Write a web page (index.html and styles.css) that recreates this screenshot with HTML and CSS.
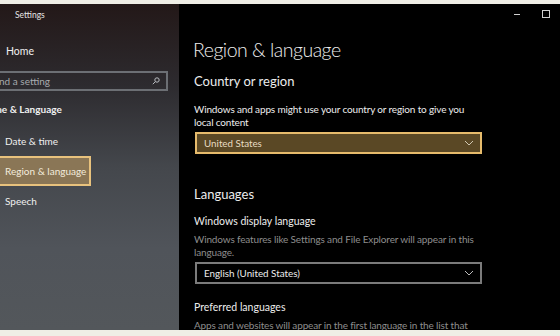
FILE: index.html
```html
<!DOCTYPE html>
<html lang="en">
<head>
    <meta charset="UTF-8">
    <title>Settings - Region &amp; language</title>
    <link rel="stylesheet" href="styles.css">
</head>
<body>
    <div class="frame">
        <div class="window">
            <aside class="sidebar">
                <div class="app-title">Settings</div>
                <div class="nav-home">Home</div>
                <div class="search-box">
                    <span>Find a setting</span>
                    <svg class="search-icon" width="8" height="8" viewBox="0 0 8 8">
                        <circle cx="5" cy="3" r="2.2" fill="none" stroke="#b8bcc0" stroke-width="1"/>
                        <line x1="3.4" y1="4.6" x2="0.8" y2="7.2" stroke="#b8bcc0" stroke-width="1"/>
                    </svg>
                </div>
                <div class="nav-group">Time &amp; Language</div>
                <div class="nav-item">Date &amp; time</div>
                <div class="nav-item selected">Region &amp; language</div>
                <div class="nav-item">Speech</div>
            </aside>

            <main class="content">
                <div class="window-controls">
                    <span class="ctrl-min"></span>
                    <span class="ctrl-max"></span>
                </div>

                <h1>Region &amp; language</h1>

                <h2>Country or region</h2>
                <p class="desc">Windows and apps might use your country or region to give you<br>local content</p>
                <div class="dropdown highlighted">
                    <span>United States</span>
                    <svg class="chevron" width="10" height="6" viewBox="0 0 10 6">
                        <polyline points="1,1 5,5 9,1" fill="none" stroke="#cfc6b0" stroke-width="1"/>
                    </svg>
                </div>

                <h2 class="languages">Languages</h2>
                <h3>Windows display language</h3>
                <p class="desc muted">Windows features like Settings and File Explorer will appear in this<br>language.</p>
                <div class="dropdown">
                    <span>English (United States)</span>
                    <svg class="chevron" width="10" height="6" viewBox="0 0 10 6">
                        <polyline points="1,1 5,5 9,1" fill="none" stroke="#bbbbbb" stroke-width="1"/>
                    </svg>
                </div>

                <h3 class="preferred">Preferred languages</h3>
                <p class="desc muted">Apps and websites will appear in the first language in the list that</p>
            </main>
        </div>
    </div>
</body>
</html>
```

FILE: styles.css
```css
body {
    margin: 0;
    width: 560px;
    height: 336px;
    overflow: hidden;
    background-color: #efeee6;
    font-family: Lato, 'Open Sans', sans-serif;
}
.frame {
    padding-top: 4px;
    height: 326px;
    background-color: #efeee6;
}
.window {
    display: flex;
    height: 326px;
    overflow: hidden;
}
.sidebar {
    width: 179px;
    flex-shrink: 0;
    background: linear-gradient(to bottom, #231818 0%, #2d2b2f 25%, #44474c 50%, #50545a 75%, #53575b 100%);
    color: #f0f0f0;
    overflow: hidden;
    white-space: nowrap;
}
.app-title {
    font-size: 8.5px;
    padding: 6px 0 0 15px;
    height: 15px;
    color: #e6e6e6;
}
.nav-home {
    font-size: 10.5px;
    padding: 20px 0 0 6px;
    height: 26px;
}
.search-box {
    display: flex;
    align-items: center;
    justify-content: space-between;
    margin-left: -20px;
    width: 168px;
    height: 16px;
    border: 2px solid #6c6f74;
    padding: 0 4px 0 12px;
    font-size: 10px;
    color: #a7aaae;
    box-sizing: content-box;
}
.search-box span {
    margin-left: -3px;
}
.search-icon {
    margin-right: 2px;
}
.nav-group {
    font-size: 10px;
    font-weight: bold;
    margin: 12px 0 0 -15px;
    height: 23px;
}
.nav-item {
    font-size: 10px;
    padding-left: 5px;
    height: 30px;
    line-height: 30px;
    box-sizing: border-box;
    width: 91px;
}
.nav-item.selected {
    margin-left: -10px;
    padding-left: 13px;
    width: 101px;
    background-color: #8a7656;
    border: 2px solid #e8c27d;
    line-height: 26px;
    color: #f3ecdc;
}
.content {
    flex: 1;
    background-color: #000;
    color: #ededed;
    padding-left: 14px;
    position: relative;
    white-space: nowrap;
}
.window-controls {
    position: absolute;
    top: 6px;
    right: 10px;
    display: flex;
    align-items: center;
    gap: 22px;
}
.ctrl-min {
    width: 6px;
    height: 1px;
    background-color: #d0d0d0;
}
.ctrl-max {
    width: 6px;
    height: 6px;
    border: 1px solid #d0d0d0;
}
h1 {
    font-size: 19.5px;
    font-weight: 300;
    letter-spacing: -0.5px;
    margin: 32px 0 0 0;
    line-height: 28px;
}
h2 {
    font-size: 13px;
    font-weight: normal;
    margin: 8px 0 0 1px;
    line-height: 18px;
}
h3 {
    font-size: 10.5px;
    font-weight: normal;
    margin: 0 0 0 1px;
    line-height: 14px;
}
.desc {
    font-size: 10px;
    letter-spacing: -0.15px;
    line-height: 12.5px;
    margin: 13px 0 0 1px;
}
.desc.muted {
    color: #8d8d8d;
    margin-top: 5px;
}
.dropdown {
    display: flex;
    align-items: center;
    justify-content: space-between;
    width: 270px;
    height: 18px;
    margin: 4px 0 0 2px;
    padding: 0 6px 0 7px;
    border: 2px solid #7b7b7b;
    font-size: 9.8px;
    box-sizing: content-box;
}
.dropdown.highlighted {
    background-color: #5a4825;
    border-color: #e6bb6c;
    color: #e8dcc2;
}
.languages {
    margin-top: 31px;
}
.languages + h3 {
    margin-top: 11px;
}
.preferred {
    margin-top: 16px;
}
```
